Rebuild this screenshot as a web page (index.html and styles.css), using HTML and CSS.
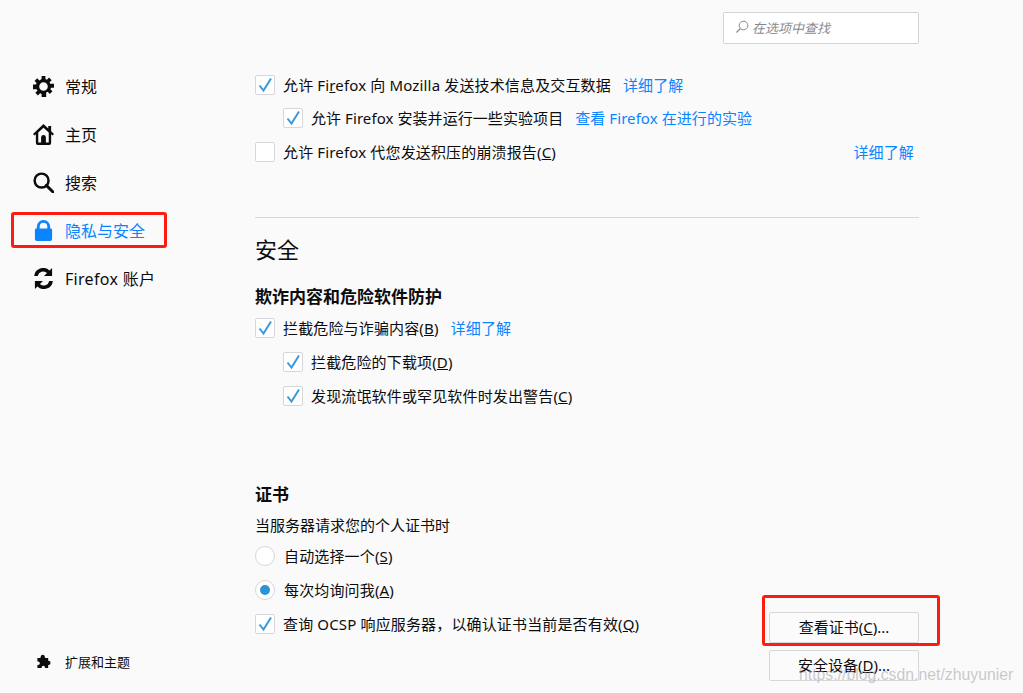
FILE: index.html
```html
<!DOCTYPE html>
<html lang="zh-CN">
<head>
<meta charset="utf-8">
<title>选项</title>
<link rel="stylesheet" href="styles.css">
</head>
<body>
<div class="app">
  <nav class="sidebar">
    <ul class="nav-list">
      <li class="nav-item">
        <svg class="nav-icon" viewBox="0 0 22 22"><path fill-rule="evenodd" d="M9 0h4v3.100l1.600.7L16.800 1.600l2.800 2.800-2.200 2.200.7 1.600H22v4h-3.100l-.7 1.600 2.200 2.200-2.800 2.800-2.200-2.200-1.600.7V22H9v-3.100l-1.600-.7-2.200 2.200-2.800-2.800 2.200-2.200-.7-1.600H0V9h3.100l.7-1.600-2.200-2.200 2.800-2.800 2.200 2.200L9 3.100zM11 6.500a4.500 4.500 0 1 0 0 9 4.500 4.500 0 0 0 0-9z"/></svg>
        <span>常规</span>
      </li>
      <li class="nav-item">
        <svg class="nav-icon" viewBox="0 0 22 22"><path fill-rule="evenodd" d="M11 0 0 10.500 1.500 12 3 10.700V20a2 2 0 0 0 2 2h12a2 2 0 0 0 2-2v-9.300l1.500 1.300L22 10.500 19 7.600V2h-3v2.800zM11 3.800l5.500 5V19.500H13.500V14a2.500 2.500 0 0 0-5 0v5.500H5.500V8.800z"/></svg>
        <span>主页</span>
      </li>
      <li class="nav-item">
        <svg class="nav-icon" viewBox="0 0 22 22"><circle cx="9" cy="9" r="7.300" fill="none" stroke="currentColor" stroke-width="2.600"/><path d="M14 14l7 7" fill="none" stroke="currentColor" stroke-width="3" stroke-linecap="round"/></svg>
        <span>搜索</span>
      </li>
      <li class="nav-item is-active">
        <svg class="nav-icon" viewBox="0 0 22 22"><path d="M4 9V7a7 7 0 0 1 14 0v2h.5A1.500 1.500 0 0 1 20 10.500V20a2 2 0 0 1-2 2H4a2 2 0 0 1-2-2v-9.500A1.500 1.500 0 0 1 3.500 9zM7 9h8V7a4 4 0 0 0-8 0z"/></svg>
        <span>隐私与安全</span>
        <i class="mark mark-nav"></i>
      </li>
      <li class="nav-item">
        <svg class="nav-icon" viewBox="0 0 22 22"><path d="M20 0v8.500h-8.500l3.200-3.200A5.800 5.800 0 0 0 5 8.500H1.200A9.500 9.500 0 0 1 17.300 2.700zM2 22v-8.500h8.500l-3.200 3.200a5.800 5.800 0 0 0 9.700-3.200h3.800A9.500 9.500 0 0 1 4.700 19.300z"/></svg>
        <span class="nav-wide">Firefox 账户</span>
      </li>
    </ul>
    <div class="nav-foot">
      <svg class="foot-icon" viewBox="0 0 16 16"><path d="M5 3.500V3a2.200 2.200 0 0 1 4.400 0v.5c0 .5.300.8.800.8H13v3h.3a2.200 2.200 0 0 1 0 4.400H13V15H9.600v-.6a1.800 1.800 0 0 0-3.600 0v.6H1.500v-3.300h.7a1.900 1.900 0 0 0 0-3.800h-.7V4.300H4.200c.5 0 .8-.3.800-.8z"/></svg>
      <span>扩展和主题</span>
    </div>
  </nav>

  <main class="content">
    <div class="search-row">
      <div class="search">
        <svg class="search-icon" viewBox="0 0 14 14"><circle cx="8.500" cy="5.500" r="4.300" fill="none" stroke="currentColor" stroke-width="1"/><path d="M5.500 8.500 1.500 12.500" fill="none" stroke="currentColor" stroke-width="1.300"/></svg>
        <span>在选项中查找</span>
      </div>
    </div>

    <section class="group-top">
      <div class="row">
        <span class="check is-on"><svg viewBox="0 0 18 18"><path d="M3.500 9.500 7.500 14.500 15 2.500"/></svg></span>
        <span class="label">允许 Fi<u>r</u>efox 向 Mozilla 发送技术信息及交互数据</span>
        <a class="link">详细了解</a>
      </div>
      <div class="row is-nested is-tight">
        <span class="check is-on"><svg viewBox="0 0 18 18"><path d="M3.500 9.500 7.500 14.500 15 2.500"/></svg></span>
        <span class="label">允许 Firefox 安装并运行一些实验项目</span>
        <a class="link">查看 Firefox 在进行的实验</a>
      </div>
      <div class="row">
        <span class="check"></span>
        <span class="label">允许 Firefox 代您发送积压的崩溃报告(<u>C</u>)</span>
        <a class="link link-end">详细了解</a>
      </div>
    </section>

    <hr class="divider">

    <h1 class="page-title">安全</h1>
    <h2 class="sub-title">欺诈内容和危险软件防护</h2>
    <div class="row">
      <span class="check is-on"><svg viewBox="0 0 18 18"><path d="M3.500 9.500 7.500 14.500 15 2.500"/></svg></span>
      <span class="label">拦截危险与诈骗内容(<u>B</u>)</span>
      <a class="link">详细了解</a>
    </div>
    <div class="row is-nested">
      <span class="check is-on"><svg viewBox="0 0 18 18"><path d="M3.500 9.500 7.500 14.500 15 2.500"/></svg></span>
      <span class="label">拦截危险的下载项(<u>D</u>)</span>
    </div>
    <div class="row is-nested">
      <span class="check is-on"><svg viewBox="0 0 18 18"><path d="M3.500 9.500 7.500 14.500 15 2.500"/></svg></span>
      <span class="label">发现流氓软件或罕见软件时发出警告(<u>C</u>)</span>
    </div>

    <h2 class="sub-title cert-title">证书</h2>
    <p class="note">当服务器请求您的个人证书时</p>
    <div class="row">
      <span class="radio"></span>
      <span class="label">自动选择一个(<u>S</u>)</span>
    </div>
    <div class="row">
      <span class="radio is-on"></span>
      <span class="label">每次均询问我(<u>A</u>)</span>
    </div>
    <div class="cert-foot">
      <div class="row">
        <span class="check is-on"><svg viewBox="0 0 18 18"><path d="M3.500 9.500 7.500 14.500 15 2.500"/></svg></span>
        <span class="label">查询 OCSP 响应服务器，以确认证书当前是否有效(<u>Q</u>)</span>
      </div>
      <div class="buttons">
        <button class="btn" type="button">查看证书(<u>C</u>)...<i class="mark mark-btn"></i></button>
        <button class="btn" type="button">安全设备(<u>D</u>)...</button>
      </div>
    </div>
  </main>
</div>
<div class="watermark">https://blog.csdn.net/zhuyunier</div>
</body>
</html>
```
FILE: styles.css
```css
* { box-sizing: border-box; }
html, body { margin: 0; height: 100%; }
body {
  background: #fafafa;
  color: #0c0c0d;
  font-family: "Noto Sans", "Noto Sans CJK SC", sans-serif;
  font-size: 15px;
  overflow: hidden;
  position: relative;
}
.app { display: flex; height: 693px; }

.sidebar {
  width: 255px;
  flex: none;
  display: flex;
  flex-direction: column;
  padding: 62px 0 20px 33px;
}
.nav-list { list-style: none; margin: 0; padding: 0; }
.nav-item {
  position: relative;
  display: flex;
  align-items: center;
  gap: 11px;
  height: 48px;
  font-size: 16px;
}
.nav-item.is-active { color: #0a84ff; }
.nav-icon { width: 21px; height: 21px; fill: currentColor; flex: none; }
.nav-wide { letter-spacing: .3px; }
.nav-foot {
  margin-top: auto;
  display: flex;
  align-items: center;
  gap: 14px;
  padding-left: 3px;
  font-size: 13px;
  height: 24px;
}
.foot-icon { width: 15px; height: 15px; fill: #0c0c0d; flex: none; }

.mark {
  position: absolute;
  display: block;
  border: 3px solid #fb1c12;
  border-radius: 3px;
  pointer-events: none;
}
.mark-nav { left: -22px; top: 6px; width: 156px; height: 36px; }
.mark-btn { left: -8px; top: -18px; width: 178px; height: 51px; }

.content { width: 664px; flex: none; }
.search-row { display: flex; justify-content: flex-end; padding-top: 12px; }
.search {
  width: 196px;
  height: 32px;
  display: flex;
  align-items: center;
  gap: 3px;
  padding-left: 11px;
  padding-bottom: 2px;
  background: #fff;
  border: 1px solid #d4d4d4;
  border-radius: 2px;
  color: #8a8a8c;
  font-size: 13px;
  font-style: italic;
}
.search-icon { width: 14px; height: 14px; flex: none; }

.group-top { margin-top: 24px; }
.row {
  display: flex;
  align-items: center;
  height: 34px;
  font-size: 15px;
}
.row.is-nested { padding-left: 28px; }
.row.is-tight { margin-top: -1px; }
.row.is-tight .label, .row.is-tight .link { letter-spacing: .07px; }
.label { margin-left: 8px; letter-spacing: .15px; position: relative; top: -1px; }
.check {
  width: 20px;
  height: 20px;
  flex: none;
  background: #fff;
  border: 1px solid #d7d7db;
  border-radius: 2px;
  display: block;
}
.check svg { display: block; width: 18px; height: 18px; }
.check path { fill: none; stroke: #3a9ad9; stroke-width: 2; }
.radio {
  width: 20px;
  height: 20px;
  flex: none;
  margin-right: 1px;
  background: #fff;
  border: 1px solid #d7d7db;
  border-radius: 50%;
  display: flex;
  align-items: center;
  justify-content: center;
}
.radio.is-on::after {
  content: "";
  width: 10px;
  height: 10px;
  border-radius: 50%;
  background: #2b93d6;
}
.link { color: #0a84ff; margin-left: 12px; letter-spacing: .15px; position: relative; top: -1px; }
.link-end { margin-left: auto; margin-right: 5px; }

.divider { border: 0; border-top: 1px solid #d7d7db; margin: 48px 0 0; }
.page-title { font-size: 22px; font-weight: 400; line-height: 30px; margin: 16px 0 0; }
.sub-title { font-size: 17px; font-weight: 700; line-height: 24px; margin: 21px 0 2px; }
.cert-title { margin: 70px 0 0; }
.note { margin: 8px 0 0; font-size: 15px; line-height: 20px; height: 24px; }

.cert-foot { display: flex; justify-content: space-between; align-items: flex-start; }
.buttons { display: flex; flex-direction: column; gap: 7px; padding-top: 5px; }
.btn {
  position: relative;
  width: 150px;
  height: 31px;
  padding: 0 0 2px;
  background: #fbfbfb;
  border: 1px solid #d7d7db;
  border-radius: 2px;
  color: #0c0c0d;
  font: inherit;
  font-size: 15px;
}
.watermark {
  position: absolute;
  left: 799px;
  top: 666px;
  color: rgba(150, 150, 150, .5);
  font-family: "Liberation Sans", sans-serif;
  font-size: 15.800px;
  white-space: nowrap;
}
```
